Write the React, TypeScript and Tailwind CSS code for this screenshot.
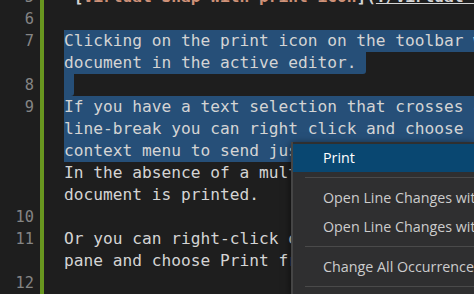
const rows: { n?: string; text: string; sel?: "full" | number; top?: boolean }[] = [
  { n: "5", text: "", top: true },
  { n: "6", text: "" },
  { n: "7", text: "Clicking on the print icon on the toolbar will print", sel: "full" },
  { text: "document in the active editor.", sel: 302 },
  { n: "8", text: "", sel: 10 },
  { n: "9", text: "If you have a text selection that crosses a", sel: "full" },
  { text: "line-break you can right click and choose Print", sel: "full" },
  { text: "context menu to send just the selection", sel: "full" },
  { text: "In the absence of a multi-line selection the whole" },
  { text: "document is printed." },
  { n: "10", text: "" },
  { n: "11", text: "Or you can right-click on the editor tab or" },
  { text: "pane and choose Print from the menu." },
  { n: "12", text: "" },
];

const menu: (string | null)[] = [
  "Print",
  null,
  "Open Line Changes with Previous Revision",
  "Open Line Changes with Working File",
  null,
  "Change All Occurrences",
  null,
];

export default function App() {
  return (
    <div className="relative h-[294px] w-[474px] overflow-hidden bg-[#1e1e1e] font-['DejaVu_Sans_Mono',monospace]">
      <div className="mt-[-14px] flex">
        {/* gutter */}
        <div className="w-[40px] shrink-0 pr-[6px] text-right text-[15.3px] text-[#858585]">
          {rows.map((r, i) => (
            <div key={i} className="flex h-[22px] items-center justify-end">
              {r.n}
            </div>
          ))}
        </div>
        <div className="w-[4px] shrink-0 bg-[#68961f]" />
        <div className="w-[20px] shrink-0" />

        {/* text */}
        <div className="min-w-0 flex-1 text-[16.2px] text-[#d4d4d4]">
          {rows.map((r, i) => {
            if (r.top)
              return (
                <div key={i} className="flex h-[22px] items-center whitespace-pre font-bold">
                  <span>*[</span>
                  <span className="text-[#ce9178]">Virtual Snap with print icon</span>
                  <span>](</span>
                  <span className="underline">./virtual-snap.md</span>
                </div>
              );
            if (r.sel === "full")
              return (
                <div key={i} className="flex h-[22px] items-center whitespace-pre bg-[#264f78]">
                  {r.text}
                </div>
              );
            if (typeof r.sel === "number")
              return (
                <div key={i} className="flex h-[22px] items-stretch whitespace-pre">
                  <span
                    className="flex items-center rounded-br-[3px] bg-[#264f78]"
                    style={{ width: r.sel }}
                  >
                    {r.text}
                  </span>
                </div>
              );
            return (
              <div key={i} className="flex h-[22px] items-center whitespace-pre">
                {r.text}
              </div>
            );
          })}
        </div>
      </div>

      {/* context menu */}
      <div className="absolute bottom-0 left-[291px] right-0 top-[142px] border-l-2 border-[#454545] bg-[#2f2f30] pt-[2px] font-['Open_Sans',sans-serif] text-[14.3px] text-[#cccccc] shadow-[0_2px_8px_rgba(0,0,0,0.6)]">
        {menu.map((m, i) =>
          m === null ? (
            <div key={i} className="py-[5px] pl-[12px]">
              <div className="h-px bg-[#4a4a4a]" />
            </div>
          ) : (
            <div
              key={i}
              className={
                i === 0
                  ? "flex h-[28px] items-center whitespace-nowrap bg-[#094771] pl-[30px] text-white"
                  : "flex h-[29px] items-center whitespace-nowrap pl-[30px]"
              }
            >
              {m}
            </div>
          )
        )}
      </div>
    </div>
  );
}
